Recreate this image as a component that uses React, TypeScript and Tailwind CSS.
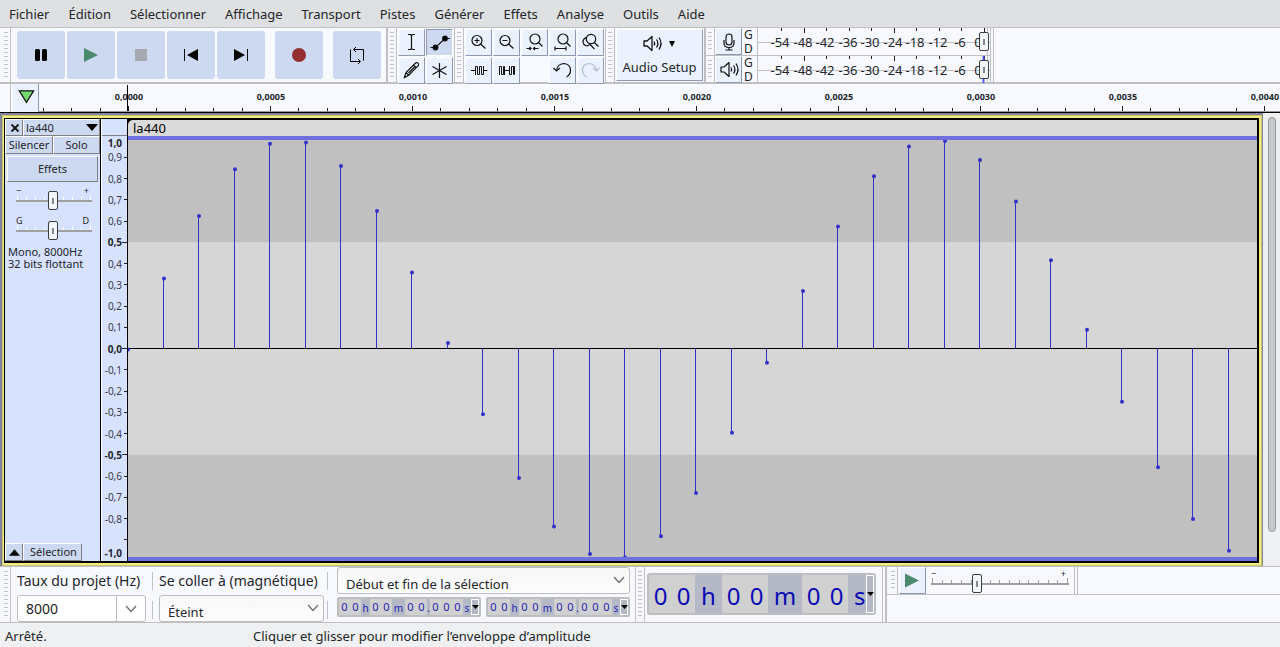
import React from "react";

const menus = [
  "Fichier",
  "Édition",
  "Sélectionner",
  "Affichage",
  "Transport",
  "Pistes",
  "Générer",
  "Effets",
  "Analyse",
  "Outils",
  "Aide",
];

const SAMPLE_STEP = 35.5;
const TICK_STEP = 28.4;

const tickCount = Math.ceil((window.innerWidth - 40) / TICK_STEP);
const sampleCount = Math.ceil((window.innerWidth - 128) / SAMPLE_STEP);

const samples = Array.from({ length: sampleCount }, (_, n) => ({
  x: Math.ceil(n * SAMPLE_STEP - 1),
  value: 0.986 * Math.sin((2 * Math.PI * 440 * n) / 8000) - 0.005,
}));

const toY = (value: number) => `${50 - value * 50}%`;

const formatNumber = (value: number, digits: number) =>
  value.toFixed(digits).replace(".", ",");

const sliderClass =
  "absolute left-0 m-0 h-[19px] w-full appearance-none bg-transparent [&::-webkit-slider-thumb]:h-[19px] [&::-webkit-slider-thumb]:w-[10px] [&::-webkit-slider-thumb]:appearance-none [&::-webkit-slider-thumb]:rounded-[2px] [&::-webkit-slider-thumb]:border [&::-webkit-slider-thumb]:border-[#3c3f42] [&::-webkit-slider-thumb]:bg-[#f4f5f6] [&::-webkit-slider-thumb]:bg-[linear-gradient(#85888b,#85888b)] [&::-webkit-slider-thumb]:bg-[length:2px_6px] [&::-webkit-slider-thumb]:bg-center [&::-webkit-slider-thumb]:bg-no-repeat";

const Grip = ({ wide }: { wide?: boolean }) => (
  <div
    className={`flex shrink-0 border-r border-[#c0c0c0] py-1 ${
      wide ? "w-[11px] pl-[4px]" : "w-[9px] pl-[2px]"
    }`}
  >
    <div className="w-[4px] bg-[repeating-linear-gradient(#c0c2c6_0_1px,transparent_1px_4px)]" />
  </div>
);

type IconButtonProps = {
  label: string;
  active?: boolean;
  children: React.ReactNode;
};

const IconButton = ({ label, active, children }: IconButtonProps) => (
  <button
    aria-label={label}
    aria-pressed={active}
    className={
      active
        ? "h-[27px] w-[27px] border border-[#8f99b3] border-r-white border-b-white bg-[#cdd9f0]"
        : "h-[27px] w-[27px] border border-white border-r-[#8f99b3] border-b-[#8f99b3] bg-[#ebf1ff]"
    }
  >
    <svg
      viewBox="1 1 25 25"
      className="h-[25px] w-[25px]"
      fill="none"
      stroke="#111"
      strokeWidth="1.2"
    >
      {children}
    </svg>
  </button>
);

const Speaker = () => (
  <>
    <path d="M6 11h3l5-4.500v14L9 16H6z" strokeLinejoin="round" />
    <path d="M16 11.500q1.300 2 0 4M18.500 9.500q2.800 4 0 8M21 7.500q4 6 0 12" />
  </>
);

const transportButtons = [
  {
    label: "Pause",
    icon: (
      <>
        <rect x="18" y="18" width="5" height="12" rx="1.5" />
        <rect x="25" y="18" width="5" height="12" rx="1.5" />
      </>
    ),
  },
  { label: "Lecture", icon: <path d="M17 17l14 7-14 7z" fill="#4b8a6c" /> },
  { label: "Arrêt", icon: <path d="M18 18h12v12H18z" fill="#a6a9b0" /> },
  { label: "Aller au début", icon: <path d="M17 18h1v12h-1zM31 18v12l-11-6z" /> },
  { label: "Aller à la fin", icon: <path d="M30 18h1v12h-1zM17 18v12l11-6z" /> },
  { label: "Enregistrer", icon: <circle cx="24" cy="24" r="7" fill="#943030" /> },
  {
    label: "Boucle",
    icon: (
      <path
        d="M17.500 18.500V30.500H27M25 28l2.500 2.500-2.500 2.500M30.500 29.500V18.500H21M23 16l-2.500 2.500 2.500 2.500"
        fill="none"
        stroke="#000"
      />
    ),
  },
];

const TransportBar = () => (
  <div className="flex border-r-2 border-[#c0c0c0]">
    <Grip wide />
    <div className="flex gap-[2px] py-[3px] pr-[5px] pl-[6px]">
      {transportButtons.map(({ label, icon }, i) => (
        <button
          key={label}
          aria-label={label}
          className={
            i > 4
              ? "ml-2 h-12 w-12 rounded-[3px] bg-[#cdd9f0]"
              : "h-12 w-12 rounded-[3px] bg-[#cdd9f0]"
          }
        >
          <svg viewBox="0 0 48 48" className="h-12 w-12">
            {icon}
          </svg>
        </button>
      ))}
    </div>
  </div>
);

const ToolsBar = () => (
  <div className="flex border-r border-[#c0c0c0]">
    <Grip />
    <div className="grid grid-cols-2 gap-px p-px">
      <IconButton label="Outil de sélection">
        <path d="M10 5.500h2.500l1 1 1-1H17M10 20.500h2.500l1-1 1 1H17M13.500 6v14" />
      </IconButton>
      <IconButton label="Outil d'enveloppe" active>
        <path d="M4.500 18.500h5l9.500-9h5" />
        <circle cx="9.500" cy="18.500" r="2.300" fill="#000" />
        <circle cx="19" cy="9.500" r="2.300" fill="#000" />
      </IconButton>
      <IconButton label="Outil de retouche">
        <path d="M6.500 20.500l1.500-5 9.500-9.500q1.500-.8 2.500.2t.2 2.500l-9.500 9.500zM15.500 8l3 3M8 15.500l3 3M10.500 16l6-6" />
      </IconButton>
      <IconButton label="Outil multifonction">
        <path d="M13.500 6v15M6.500 9.500l14 8M20.500 9.500l-14 8" />
      </IconButton>
    </div>
  </div>
);

const EditBar = () => (
  <div className="flex border-r border-[#c0c0c0]">
    <Grip />
    <div className="grid grid-cols-5 gap-px p-px">
      <IconButton label="Zoom avant">
        <circle cx="12" cy="11.500" r="5" />
        <path d="M15.500 15l5 4.500M9.500 11.500h5M12 9v5" />
      </IconButton>
      <IconButton label="Zoom arrière">
        <circle cx="12" cy="11.500" r="5" />
        <path d="M15.500 15l5 4.500M9.500 11.500h5" />
      </IconButton>
      <IconButton label="Zoom sur la sélection">
        <circle cx="14" cy="10" r="5" />
        <path d="M17.500 13.500l4 4M5.500 19.500h4.500M8.500 18l1.500 1.500-1.500 1.500M17.500 19.500h-5M14 18l-1.500 1.500 1.500 1.500" />
      </IconButton>
      <IconButton label="Adapter à la largeur">
        <circle cx="14" cy="10" r="5" />
        <path d="M17.500 13.500l4 4M6 19.500h11M6 17.500v4M17 17.500v4" />
      </IconButton>
      <IconButton label="Bascule de zoom">
        <circle cx="14" cy="10" r="4.700" />
        <path d="M10 8.300q-3.300.7-4 3.700 0 4.500 4.300 5l2.500-1.500M13 15.500l4.500 4.500M17.500 13.500l4 4" />
      </IconButton>
      <IconButton label="Rogner l'audio">
        <path
          d="M6 13.500h4.500M10.500 18V9.500h2V17.500h2V9.500h2V17.500h2V9M18.500 13.500h4"
          strokeWidth="1"
        />
      </IconButton>
      <IconButton label="Réduire l'audio au silence">
        <path
          d="M6.500 18V9.500h2V17.500h2V9.500h1V18M11.500 13.500h5M16.500 9v8.500h2V9.500h2V17.500h1V9"
          strokeWidth="1"
        />
      </IconButton>
      <div />
      <IconButton label="Annuler">
        <path d="M7.500 13.500q1-7 8-7 6 1 6 7 0 4-4 6.500M4.500 11l3 3 3.500-3" />
      </IconButton>
      <IconButton label="Rétablir">
        <path
          d="M19.500 13.500q-1-7-8-7-6 1-6 7 0 4 4 6.500M22.500 11l-3 3-3.500-3"
          stroke="#b6bcc9"
        />
      </IconButton>
    </div>
  </div>
);

const AudioSetup = () => (
  <div className="flex border-r-2 border-[#c0c0c0]">
    <Grip />
    <button className="m-px flex w-[87px] flex-col items-center border border-white border-r-[#8f99b3] border-b-[#8f99b3] bg-[#ebf1ff]">
      <span className="flex h-[27px] items-center gap-[3px] pr-[6px]">
        <svg
          viewBox="0 0 27 27"
          className="h-[27px] w-[27px]"
          fill="none"
          stroke="#111"
          strokeWidth="1.3"
        >
          <Speaker />
        </svg>
        <svg viewBox="0 0 8 6" className="h-[6px] w-[8px]">
          <path d="M1 0h6L4 6z" />
        </svg>
      </span>
      <span className="text-[13px] leading-[20px]">Audio Setup</span>
    </button>
  </div>
);

const meterLabels = [-54, -48, -42, -36, -30, -24, -18, -12, -6, 0];

type MeterProps = { label: string; peak?: boolean; children: React.ReactNode };

const Meter = ({ label, peak, children }: MeterProps) => (
  <div className="flex h-[28px] border-b border-[#c0c0c0]">
    <Grip />
    <IconButton label={label}>{children}</IconButton>
    <div className="flex w-[15px] flex-col pl-[2px] text-[12px] leading-[14px]">
      <span>G</span>
      <span>D</span>
    </div>
    <div className="relative w-[234px] border-r border-l border-[#c0c0c0]">
      <svg className="h-[27px] w-full text-[13px]">
        <path d="M0 14.500h232" stroke="#c0c0c0" />
        {meterLabels.map((db, i) => (
          <React.Fragment key={db}>
            <path
              d={`M${Math.round(23 + i * 22.5)}.5 0v${i % 4 === 1 ? 5 : 3}`}
              stroke="#222"
            />
            <text
              x={db === 0 ? 220 : Math.round(22 + i * 22.5)}
              y="19"
              textAnchor="middle"
              fill="#232629"
            >
              {db}
            </text>
          </React.Fragment>
        ))}
        {peak && <path d="M225.500 0v27" stroke="#5555ff" strokeWidth="2" />}
        <path d="M229.500 0v27" stroke="#c8c8c8" />
      </svg>
      <input
        type="range"
        aria-label={`${label} - volume`}
        defaultValue={100}
        className={`${sliderClass} top-[4px] pr-[1px]`}
      />
    </div>
  </div>
);

const MeterBars = () => (
  <div className="flex border-r border-[#c0c0c0] pr-[2px]">
    <div>
      <Meter label="Niveau d'enregistrement">
        <rect x="11" y="6" width="6" height="11" rx="3" />
        <path d="M9 12v3q0 4.500 5 4.500t5-4.500v-3M14 19.500v2.500M10.500 22h7" />
      </Meter>
      <Meter label="Niveau de lecture" peak>
        <Speaker />
      </Meter>
    </div>
  </div>
);

const Timeline = () => (
  <div className="flex h-[29px] shrink-0 border-b border-black bg-[#f8f9ff]">
    <div className="w-[11px] border-r border-[#c0c0c0]" />
    <button
      aria-label="Épingler la tête de lecture"
      className="ml-[2px] w-[26px] border-r border-[#8f99b3] bg-[#ebf1ff]"
    >
      <svg viewBox="0 0 26 28" className="h-7 w-[25px]">
        <path d="M6.500 6.500h15L14 18.500z" fill="#74d86c" stroke="#111" strokeWidth="1.300" />
      </svg>
    </button>
    <svg className="h-7 flex-1 border-b border-[#9a9a9a] text-[9px] font-bold">
      {Array.from({ length: tickCount }, (_, i) => {
        const x = Math.round(89 + (i - 3) * TICK_STEP);
        const major = (i - 3) % 5 === 0;
        const time = (i - 3) / 10000;
        return (
          <React.Fragment key={i}>
            <path d={`M${x}.5 ${major ? 22 : 24}V27`} stroke="#111" />
            {major && (
              <text x={x + 1} y="16" textAnchor="middle" fill="#232629">
                {formatNumber(time, 4)}
              </text>
            )}
          </React.Fragment>
        );
      })}
      <path d="M88.500 1v26" stroke="#000" />
    </svg>
  </div>
);

type TickSliderProps = {
  label: string;
  min: string;
  max: string;
  value: number;
  ticks: number;
  dark?: boolean;
};

const TickSlider = ({ label, min, max, value, ticks, dark }: TickSliderProps) => (
  <div className="relative h-[26px] text-[9px] leading-[10px]">
    <div className="flex justify-between pr-[3px]">
      <span>{min}</span>
      <span>{max}</span>
    </div>
    <div className="absolute inset-x-0 top-[14px] h-[2px] bg-[#a0a0a0]" />
    <div className="absolute inset-x-[1px] top-[9px] flex h-[5px] items-end justify-between">
      {Array.from({ length: ticks }, (_, i) => (
        <span
          key={i}
          className={`w-px ${dark ? "bg-[#a0a0a0]" : "bg-white"} ${
            i === 0 || i === ticks - 1 ? "h-[5px]" : "h-[3px]"
          }`}
        />
      ))}
    </div>
    <input
      type="range"
      aria-label={label}
      defaultValue={value}
      className={`${sliderClass} top-[5px]`}
    />
  </div>
);

const raised = "border border-white border-r-[#808080] border-b-[#808080] bg-[#cdd9f0]";

const TrackPanel = () => (
  <div className="flex w-[96px] shrink-0 flex-col border-r border-black bg-[#d6e2ff] text-[11px]">
    <div className="flex h-[17px]">
      <button aria-label="Fermer la piste" className={`${raised} w-[18px]`}>
        <svg viewBox="0 0 16 15" className="h-[15px] w-4">
          <path d="M5.500 4.500l7 7M12.500 4.500l-7 7" stroke="#111" strokeWidth="1.800" />
        </svg>
      </button>
      <button className={`${raised} flex flex-1 items-center justify-between pr-px pl-[2px]`}>
        <span className="leading-[15px]">la440</span>
        <svg viewBox="0 0 12 7" className="h-[7px] w-3">
          <path d="M0 0h12L6 7z" />
        </svg>
      </button>
    </div>
    <div className="flex h-[18px] leading-[16px]">
      <button className={`${raised} w-[48px]`}>Silencer</button>
      <button className={`${raised} flex-1 pr-[6px] pl-[6px]`}>Solo</button>
    </div>
    <button className={`${raised} mx-[2px] mt-[2px] h-[26px]`}>Effets</button>
    <div className="mt-[4px] pr-[8px] pl-[11px]">
      <TickSlider label="Gain" min="−" max="+" value={49} ticks={9} />
      <div className="mt-[4px]">
        <TickSlider label="Panoramique" min="G" max="D" value={49} ticks={9} />
      </div>
    </div>
    <p className="mt-[4px] pl-[3px] leading-[12px]">
      Mono, 8000Hz
      <br />
      32 bits flottant
    </p>
    <div className="mt-auto flex h-[18px] leading-[16px]">
      <button aria-label="Réduire" className={`${raised} w-[18px] pl-[3px]`}>
        <svg viewBox="0 0 12 7" className="h-[7px] w-[11px]">
          <path d="M0 7h12L6 0z" />
        </svg>
      </button>
      <button className={`${raised} w-[59px] pl-[2px]`}>Sélection</button>
    </div>
  </div>
);

const VerticalRuler = () => (
  <div className="flex w-[26px] shrink-0 flex-col border-l border-white bg-[#d6e2ff]">
    <div className="h-[17px] border-b border-[#808080]" />
    <svg className="w-full flex-1 text-[10px]" shapeRendering="crispEdges">
      {Array.from({ length: 21 }, (_, i) => {
        const value = (10 - i) / 10;
        const major = i % 5 === 0;
        const edge = i === 0 ? 11 : i === 20 ? -4 : 4;
        return (
          <React.Fragment key={i}>
            {i > 0 && (
              <line
                x1={major ? 20 : 22}
                x2="25"
                y1={toY(value)}
                y2={toY(value)}
                stroke="#222"
              />
            )}
            {i !== 19 && (
              <text
                x="20"
                y={toY(value)}
                dy={edge}
                textAnchor="end"
                fill={major ? "#232629" : "#3c4046"}
                fontWeight={major ? 700 : 400}
              >
                {formatNumber(value, 1)}
              </text>
            )}
          </React.Fragment>
        );
      })}
    </svg>
  </div>
);

const Waveform = () => (
  <div className="flex min-w-0 flex-1 flex-col border-r-2 border-l border-black bg-black">
    <div className="mt-px h-[16px] rounded-tl-[5px] bg-[#dadada] pl-[5px] text-[13px] leading-[16px] text-black">
      la440
    </div>
    <svg className="w-full flex-1 bg-[#c0c0c0]">
      <rect y="25%" width="100%" height="50%" fill="#d6d6d6" />
      <line x1="0" x2="100%" y1="50%" y2="50%" stroke="#000" shapeRendering="crispEdges" />
      {samples.map(({ x, value }) => (
        <g key={x} stroke="#3232c8">
          <line x1={x + 0.5} x2={x + 0.5} y1="50%" y2={toY(value)} />
          <circle cx={x + 1} cy={toY(value)} r="2" fill="#3232c8" stroke="none" />
        </g>
      ))}
      <rect width="100%" height="4" fill="#7070dc" />
      <rect y="100%" width="100%" height="4" fill="#7070dc" transform="translate(0 -4)" />
    </svg>
  </div>
);

const TrackArea = () => (
  <div className="flex min-h-[300px] flex-1 bg-[#eff0f1]">
    <div className="flex min-w-0 flex-1 border-t-2 border-r border-l-2 border-[#84849c]">
      <div className="flex min-w-0 flex-1 border-[3px] border-l-2 border-[#f0ec80] outline outline-offset-[-1px] outline-[#c8c470]">
        <div className="flex min-w-0 flex-1 border-t border-b-2 border-l border-black">
          <TrackPanel />
          <VerticalRuler />
          <Waveform />
        </div>
      </div>
    </div>
    <div className="w-[17px] shrink-0 pt-1 pb-[34px] pl-[5px]">
      <div className="h-full w-[8px] rounded-full border border-[#95979a] bg-[#c9cacc]" />
    </div>
  </div>
);

const Chevron = () => (
  <svg
    viewBox="0 0 12 8"
    className="pointer-events-none h-2 w-3"
    fill="none"
    stroke="#6b6e71"
    strokeWidth="1.300"
  >
    <path d="M1 1l5 5.500L11 1" />
  </svg>
);

const Select = ({ label, option }: { label: string; option: string }) => (
  <div className="relative">
    <select
      aria-label={label}
      className="h-[27px] w-full appearance-none rounded-[3px] border border-[#bcbebf] bg-linear-to-b from-[#f7f7f8] to-[#fdfdfd] pt-[7px] pl-[8px] text-[13px] leading-[18px]"
    >
      <option>{option}</option>
    </select>
    <span className="pointer-events-none absolute top-[9px] right-[5px] flex">
      <Chevron />
    </span>
  </div>
);

const smallTime = ["00", "h", "00", "m", "00", ".", "000", "s"];

const SmallTime = ({ label }: { label: string }) => (
  <div
    role="group"
    aria-label={label}
    className="flex h-5 w-[144px] rounded-[2px] border-2 border-[#bcbebf] bg-[#b4b9c5] text-[11px] leading-4 text-[#1e1eb4]"
  >
    {smallTime.map((part, i) =>
      /\d/.test(part) ? (
        <span key={i} className="flex bg-[#d0d0d0]">
          {part.split("").map((digit, j) => (
            <span key={j} className="w-[11px] text-center">
              {digit}
            </span>
          ))}
        </span>
      ) : (
        <span
          key={i}
          className={
            part === "."
              ? "w-[3px] pt-px"
              : part === "m"
                ? "w-[13px] pt-px text-center text-[10px]"
                : part === "h"
                  ? "w-[9px] pt-px text-center text-[10px]"
                  : "min-w-0 flex-1 pt-px text-center text-[10px]"
          }
        >
          {part}
        </span>
      ),
    )}
    <button aria-label="Format" className="flex w-[8px] items-center border border-white">
      <svg viewBox="0 0 7 4" className="h-1 w-[7px] shrink-0">
        <path d="M0 0h7L3.500 4z" />
      </svg>
    </button>
  </div>
);

const bigTime = ["00", "h", "00", "m", "00", "s"];

const BigTime = () => (
  <div
    role="group"
    aria-label="Position audio"
    className="flex h-[42px] w-[229px] rounded-[3px] border-2 border-[#bcbebf] bg-[#b4b9c5] text-[24px] leading-[42px] text-[#0a0ab4]"
  >
    {bigTime.map((part, i) =>
      part === "00" ? (
        <span key={i} className="flex bg-[#d0d0d0]">
          <span className="w-[23px] text-center">0</span>
          <span className="w-[23px] text-center">0</span>
        </span>
      ) : (
        <span
          key={i}
          className={
            part === "s"
              ? "min-w-0 flex-1 overflow-hidden pl-[6px]"
              : part === "m"
                ? "w-[34px] text-center"
                : "w-[27px] text-center"
          }
        >
          {part}
        </span>
      ),
    )}
    <button aria-label="Format" className="flex w-[8px] items-center border border-white">
      <svg viewBox="0 0 7 4" className="h-1 w-[7px] shrink-0">
        <path d="M0 0h7L3.500 4z" />
      </svg>
    </button>
  </div>
);

const Divider = ({ near }: { near?: boolean }) => (
  <div
    className={`flex w-[13px] flex-col gap-[11px] pt-[5px] ${near ? "pl-[3px]" : "pl-[6px]"}`}
  >
    <span className="h-[18px] w-px bg-[#c0c2c6]" />
    <span className="h-[18px] w-px bg-[#c0c2c6]" />
  </div>
);

const SelectionBar = () => (
  <div className="flex border-r border-[#c0c0c0]">
    <Grip wide />
    <div className="ml-[6px] w-[129px]">
      <label htmlFor="rate" className="block h-7 text-[14px] leading-[28px] whitespace-nowrap">
        Taux du projet (Hz)
      </label>
      <div className="flex h-[27px] items-center rounded-[3px] border border-[#bcbebf] bg-white">
        <input
          id="rate"
          defaultValue="8000"
          className="h-full min-w-0 flex-1 border-r border-[#bcbebf] pl-2 text-[14px]"
        />
        <button aria-label="Choisir le taux" className="flex w-7 justify-center">
          <Chevron />
        </button>
      </div>
    </div>
    <Divider />
    <div className="w-[165px]">
      <p className="h-7 text-[14px] leading-[28px] whitespace-nowrap">
        Se coller à (magnétique)
      </p>
      <Select label="Se coller à (magnétique)" option="Éteint" />
    </div>
    <Divider near />
    <div className="mr-[5px] w-[293px]">
      <Select label="Mode de sélection" option="Début et fin de la sélection" />
      <div className="mt-[2px] flex justify-between">
        <SmallTime label="Début de la sélection" />
        <SmallTime label="Fin de la sélection" />
      </div>
    </div>
  </div>
);

const PlayAtSpeed = () => (
  <div className="flex-1">
    <div className="flex h-7 border-b border-[#c0c0c0]">
      <Grip wide />
      <div className="pr-[5px] pl-px">
        <IconButton label="Lire à la vitesse">
          <path d="M6 6.500l14 7-14 7z" fill="#4b8a6c" stroke="none" />
        </IconButton>
      </div>
      <div className="w-[138px] pt-[2px]">
        <TickSlider label="Vitesse de lecture" min="−" max="+" value={32} ticks={15} dark />
      </div>
      <div className="ml-[5px] w-[4px] border-r border-l border-[#c0c0c0]" />
    </div>
  </div>
);

export default function App() {
  return (
    <div className="flex h-screen flex-col overflow-hidden bg-[#f8f9ff] font-['Noto_Sans',sans-serif] text-[#232629]">
      <nav className="flex h-7 shrink-0 items-center gap-[19px] border-b border-[#c0c0c0] bg-[#dee0e2] pt-[2px] pl-[9px] text-[13px]">
        {menus.map((menu) => (
          <button key={menu}>{menu}</button>
        ))}
      </nav>
      <div className="flex h-14 shrink-0 border-b-2 border-[#c0c0c0]">
        <TransportBar />
        <ToolsBar />
        <EditBar />
        <AudioSetup />
        <MeterBars />
      </div>
      <Timeline />
      <TrackArea />
      <div className="flex h-[57px] shrink-0 border-t border-b border-[#c0c0c0]">
        <SelectionBar />
        <div className="flex border-r border-[#c0c0c0]">
          <Grip />
          <div className="pt-[6px] pr-[6px] pl-[2px]">
            <BigTime />
          </div>
        </div>
        <div className="w-[4px] border-r-2 border-[#c0c0c0]" />
        <PlayAtSpeed />
      </div>
      <footer className="flex h-6 shrink-0 items-center bg-[#eff0f1] pt-[3px] pl-[5px] text-[13px]">
        <span className="w-[248px]">Arrêté.</span>
        <span>Cliquer et glisser pour modifier l’enveloppe d’amplitude</span>
      </footer>
    </div>
  );
}
